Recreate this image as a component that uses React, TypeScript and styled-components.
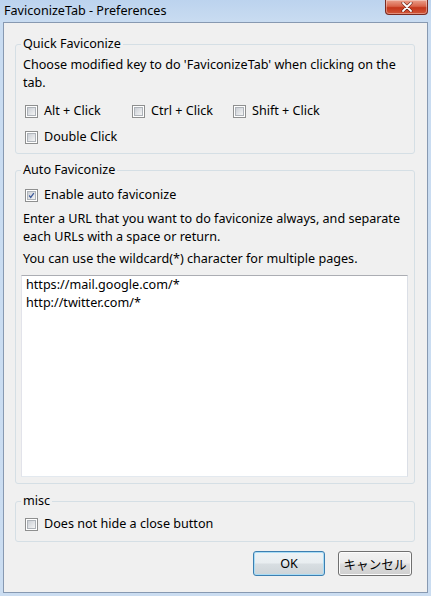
import React from 'react';
import styled, { createGlobalStyle } from 'styled-components';

const FONT = `"Noto Sans", "Noto Sans CJK JP", sans-serif`;

const Global = createGlobalStyle`
  html, body { margin: 0; padding: 0; }
  body { width: 431px; height: 596px; overflow: hidden; background: #c9dcf0; }
  * { box-sizing: border-box; }
`;

const Window = styled.div`
  width: 431px;
  height: 596px;
  display: flex;
  flex-direction: column;
  padding: 0 3px 3px 3px;
  background: linear-gradient(to bottom, #bcd3ee 0px, #c9dcf1 22px, #cbddf1 100%);
  font-family: ${FONT};
  font-size: 12.6px;
  color: #000;
`;

const TitleBar = styled.div`
  height: 22px;
  display: flex;
  align-items: flex-start;
  justify-content: space-between;
`;

const Title = styled.div`
  line-height: 22px;
  padding-left: 1px;
  color: #000;
`;

const CloseButton = styled.div`
  width: 43px;
  height: 15px;
  border: 1px solid #7a2a20;
  border-top: none;
  border-radius: 0 0 4px 4px;
  background: linear-gradient(to bottom, #eba08c 0%, #d9644a 45%, #c4361a 55%, #d2573a 100%);
  box-shadow: inset 0 0 0 1px rgba(255, 255, 255, 0.35);
  display: flex;
  align-items: center;
  justify-content: center;
`;

const Client = styled.div`
  flex: 1;
  background: #f0f0f0;
  border: 1px solid #8799b1;
  display: flex;
  flex-direction: column;
  padding: 13px 12px 0 11px;
`;

const Group = styled.fieldset<{ $mt?: number; $pt: number; $pb: number }>`
  margin: ${p => p.$mt ?? 0}px 0 0 0;
  border: 1px solid #d5dfe5;
  border-radius: 3px;
  padding: ${p => p.$pt}px 6px ${p => p.$pb}px 5px;
  min-width: 0;
`;

const Legend = styled.legend`
  padding: 0 2px;
  line-height: 16px;
`;

const Text = styled.div<{ $mt?: number }>`
  line-height: 18px;
  padding-left: 2px;
  margin-top: ${p => p.$mt ?? 0}px;
`;

const CheckRow = styled.div<{ $mt?: number }>`
  display: flex;
  margin-top: ${p => p.$mt ?? 0}px;
  padding-left: 4px;
`;

const CheckItem = styled.label<{ $w?: number }>`
  display: flex;
  align-items: center;
  gap: 6px;
  height: 18px;
  line-height: 18px;
  width: ${p => (p.$w ? `${p.$w}px` : 'auto')};
`;

const Box = styled.span`
  width: 13px;
  height: 13px;
  flex: none;
  border: 1px solid #8e8f8f;
  background: #fff;
  padding: 1px;
  display: flex;
  align-items: center;
  justify-content: center;
  & > span {
    width: 9px;
    height: 9px;
    background: linear-gradient(135deg, #cbcfd5 0%, #e3e5e8 60%, #f4f4f4 100%);
    border: 1px solid #aeb3b9;
    display: flex;
    align-items: center;
    justify-content: center;
  }
`;

const TextArea = styled.textarea`
  display: block;
  width: 100%;
  height: 202px;
  margin-top: 7px;
  padding: 0 4px;
  border: 1px solid;
  border-color: #abadb3 #dbdfe6 #e3e9ef #e2e3ea;
  background: #fff;
  font-family: ${FONT};
  font-size: 12.6px;
  line-height: 18px;
  color: #000;
  resize: none;
  outline: none;
  overflow: hidden;
`;

const ButtonRow = styled.div`
  display: flex;
  justify-content: flex-end;
  gap: 13px;
  margin-top: 9px;
  margin-right: 3px;
`;

const Button = styled.button<{ $w: number; $default?: boolean }>`
  width: ${p => p.$w}px;
  height: 25px;
  border: 1px solid ${p => (p.$default ? '#3c7fb1' : '#707070')};
  border-radius: 3px;
  background: ${p =>
    p.$default
      ? 'linear-gradient(to bottom, #eef3f6 0%, #e8edf0 48%, #d8dee2 52%, #cdd4d8 100%)'
      : 'linear-gradient(to bottom, #f2f2f2 0%, #ebebeb 48%, #dddddd 52%, #cfcfcf 100%)'};
  box-shadow: inset 0 0 0 1px ${p => (p.$default ? '#a9dcf5' : '#fcfcfc')};
  font-family: ${FONT};
  font-size: 12.6px;
  color: #000;
  padding: 0;
`;

const Checkbox: React.FC<{ checked?: boolean; label: string; w?: number }> = ({ checked, label, w }) => (
  <CheckItem $w={w}>
    <Box>
      <span>
        {checked && (
          <svg width="9" height="9" viewBox="0 0 9 9">
            <path d="M1.5 4.5 L3.5 7 L7.5 1.5" fill="none" stroke="#3d5a9a" strokeWidth="1.6" />
          </svg>
        )}
      </span>
    </Box>
    {label}
  </CheckItem>
);

export default function App() {
  return (
    <>
      <Global />
      <Window>
        <TitleBar>
          <Title>FaviconizeTab - Preferences</Title>
          <CloseButton>
            <svg width="12" height="10" viewBox="0 0 12 10">
              <path d="M2 1 L10 9 M10 1 L2 9" stroke="#5a1a10" strokeWidth="3" strokeLinecap="round" />
              <path d="M2 1 L10 9 M10 1 L2 9" stroke="#fff" strokeWidth="1.8" strokeLinecap="round" />
            </svg>
          </CloseButton>
        </TitleBar>
        <Client>
          <Group $pt={4} $pb={7}>
            <Legend>Quick Faviconize</Legend>
            <Text>Choose modified key to do 'FaviconizeTab' when clicking on the tab.</Text>
            <CheckRow $mt={10}>
              <Checkbox label="Alt + Click" w={107} />
              <Checkbox label="Ctrl + Click" w={101} />
              <Checkbox label="Shift + Click" />
            </CheckRow>
            <CheckRow $mt={8}>
              <Checkbox label="Double Click" />
            </CheckRow>
          </Group>
          <Group $mt={8} $pt={8} $pb={6}>
            <Legend>Auto Faviconize</Legend>
            <CheckRow>
              <Checkbox label="Enable auto faviconize" checked />
            </CheckRow>
            <Text $mt={6}>
              Enter a URL that you want to do faviconize always, and separate each URLs with a space or return.
            </Text>
            <Text $mt={4}>You can use the wildcard(*) character for multiple pages.</Text>
            <TextArea readOnly defaultValue={'https://mail.google.com/*\nhttp://twitter.com/*'} />
          </Group>
          <Group $mt={9} $pt={6} $pb={8}>
            <Legend>misc</Legend>
            <CheckRow>
              <Checkbox label="Does not hide a close button" />
            </CheckRow>
          </Group>
          <ButtonRow>
            <Button $w={72} $default>OK</Button>
            <Button $w={74}>キャンセル</Button>
          </ButtonRow>
        </Client>
      </Window>
    </>
  );
}
